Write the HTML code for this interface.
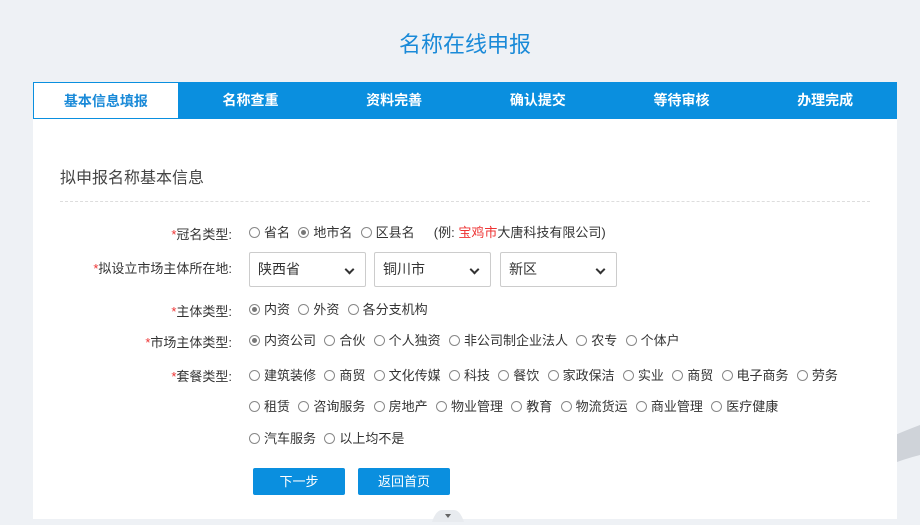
<!DOCTYPE html>
<html><head><meta charset="utf-8"><style>
body{margin:0;width:920px;height:525px;background:#eef1f5;font-family:"Liberation Sans","Noto Sans CJK SC",sans-serif;position:relative;overflow:hidden;color:#333}
.abs{position:absolute}
.title{left:0;width:930px;top:27px;text-align:center;font-size:22px;color:#1a8ad8}
.card{left:33px;top:82px;width:864px;height:443px;background:#fff}
.tabs{left:33px;top:82px;width:864px;height:37px;background:#0a8fdf;display:flex}
.tabs div{flex:1;color:#fff;font-size:14px;font-weight:bold;text-align:center;line-height:37px}
.tabs div.on{background:#fff;color:#1a8ad8;border:1px solid #0a8fdf;box-sizing:border-box}
.sub{left:60px;top:164px;font-size:16px;color:#444}
.dash{left:60px;top:201px;width:810px;border-top:1px dashed #ddd}
.lab{right:688px;font-size:13px;color:#333;white-space:nowrap}
.lab b{color:#e33;font-weight:normal}
.row{left:249px;font-size:13px;white-space:nowrap}
.r{display:inline-block;width:9px;height:9px;border:1px solid #888;border-radius:50%;margin-right:4px;vertical-align:-1px;position:relative}
.r.c::after{content:"";position:absolute;left:2px;top:2px;width:5px;height:5px;border-radius:50%;background:#777}
.row span{margin-right:8.3px}
.sel{top:252px;border:1px solid #ccc;border-radius:2px;font-size:14px;line-height:33px;padding-left:8px;box-sizing:border-box;height:35px}
.sel::after{content:"";position:absolute;right:12px;top:13px;width:5px;height:5px;border-right:2px solid #333;border-bottom:2px solid #333;transform:rotate(45deg)}
.btn{top:468px;width:92px;height:27px;background:#0a8fdf;color:#fff;font-size:13px;text-align:center;line-height:27px;border-radius:2px}
</style></head><body>
<svg class="abs" style="left:0;top:300px" width="920" height="225"><path d="M820 170 Q880 140 920 125 L920 155 Q880 165 840 190Z" fill="#cfd3d9"/></svg>
<div class="abs title">名称在线申报</div>
<div class="abs card"></div>
<div class="abs tabs"><div class="on">基本信息填报</div><div>名称查重</div><div>资料完善</div><div>确认提交</div><div>等待审核</div><div>办理完成</div></div>
<div class="abs sub">拟申报名称基本信息</div>
<div class="abs dash"></div>
<div class="abs lab" style="top:224px"><b>*</b>冠名类型:</div>
<div class="abs row" style="top:222px"><span><i class="r"></i>省名</span><span><i class="r c"></i>地市名</span><span><i class="r"></i>区县名</span>&nbsp;&nbsp;&nbsp;(例: <span style="color:#e33;margin:0">宝鸡市</span>大唐科技有限公司)</div>
<div class="abs lab" style="top:258px"><b>*</b>拟设立市场主体所在地:</div>
<div class="abs sel" style="left:249px;width:117px">陕西省</div>
<div class="abs sel" style="left:374px;width:117px">铜川市</div>
<div class="abs sel" style="left:500px;width:117px">新区</div>
<div class="abs lab" style="top:301px"><b>*</b>主体类型:</div>
<div class="abs row" style="top:299px"><span><i class="r c"></i>内资</span><span><i class="r"></i>外资</span><span><i class="r"></i>各分支机构</span></div>
<div class="abs lab" style="top:332px"><b>*</b>市场主体类型:</div>
<div class="abs row" style="top:330px"><span><i class="r c"></i>内资公司</span><span><i class="r"></i>合伙</span><span><i class="r"></i>个人独资</span><span><i class="r"></i>非公司制企业法人</span><span><i class="r"></i>农专</span><span><i class="r"></i>个体户</span></div>
<div class="abs lab" style="top:366px"><b>*</b>套餐类型:</div>
<div class="abs row" style="top:365px"><span><i class="r"></i>建筑装修</span><span><i class="r"></i>商贸</span><span><i class="r"></i>文化传媒</span><span><i class="r"></i>科技</span><span><i class="r"></i>餐饮</span><span><i class="r"></i>家政保洁</span><span><i class="r"></i>实业</span><span><i class="r"></i>商贸</span><span><i class="r"></i>电子商务</span><span><i class="r"></i>劳务</span></div>
<div class="abs row" style="top:396px"><span><i class="r"></i>租赁</span><span><i class="r"></i>咨询服务</span><span><i class="r"></i>房地产</span><span><i class="r"></i>物业管理</span><span><i class="r"></i>教育</span><span><i class="r"></i>物流货运</span><span><i class="r"></i>商业管理</span><span><i class="r"></i>医疗健康</span></div>
<div class="abs row" style="top:428px"><span><i class="r"></i>汽车服务</span><span><i class="r"></i>以上均不是</span></div>
<div class="abs btn" style="left:253px">下一步</div>
<div class="abs btn" style="left:358px">返回首页</div>
<div class="abs" style="left:0;top:519px;width:920px;height:6px;background:#eef1f5"></div>
<svg class="abs" style="left:428px;top:510px" width="40" height="12"><path d="M4 12 Q8 0 14 0 L26 0 Q32 0 36 12Z" fill="#e8ebef"/><path d="M17 4 L23 4 L20 8Z" fill="#666"/></svg>
</body></html>
